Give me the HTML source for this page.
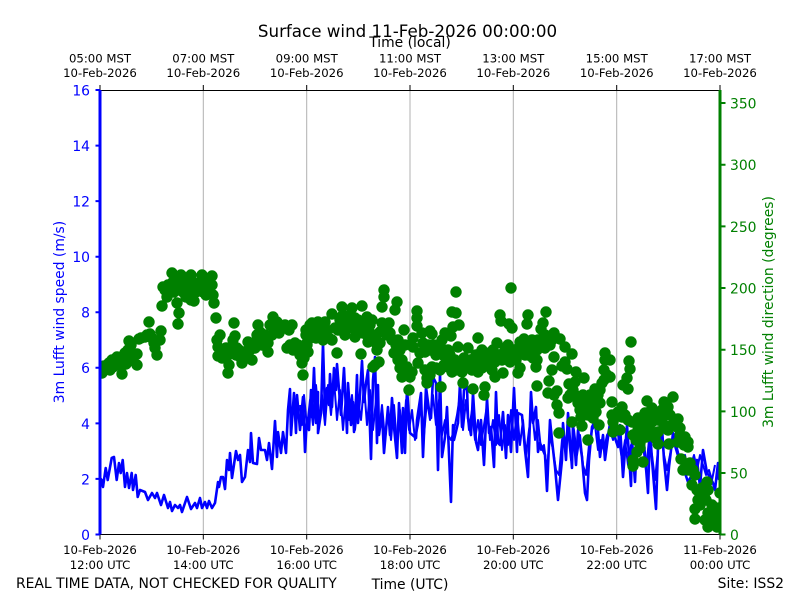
<!DOCTYPE html>
<html><head><meta charset="utf-8"><style>html,body{margin:0;padding:0;background:#fff}svg{display:block}text{font-family:"DejaVu Sans","Liberation Sans",sans-serif}</style></head><body>
<svg width="800" height="600" viewBox="0 0 800 600" xmlns="http://www.w3.org/2000/svg">
<defs><clipPath id="c"><rect x="100" y="90" width="620" height="444.5"/></clipPath></defs>
<path d="M203.3 90V534.5M306.7 90V534.5M410 90V534.5M513.3 90V534.5M616.7 90V534.5" stroke="#b0b0b0" stroke-width="1" fill="none"/>
<g clip-path="url(#c)">
<polyline fill="none" stroke="#0000ff" stroke-width="2.6" stroke-linejoin="round" points="100,478 101.7,480 103,487 105.7,468 107.7,480 111.7,458 114,457 116.7,480 119,463 120.7,473 122.7,460 125,487 127,473 129,488 131.7,473 133,490 135.7,475 137.7,497 140,490 145,492 148,500 152,493 155,498 157,493 161,505 164,495 168,508 170,502 172,511 175,505 178,508 180,505 182,512 187,497 191,509 195,503 197,508 200,498 202,508 205,502 207,508 209,501 212,508 215,503 218,482 219,487 221,477 223,477 225,489 227,460 229,470 230,453 232,478 236,451 238,460 240,455 242,482 245,477 248,450 250,462 251,433 253,463 257,464 259,438 261,450 265,450 267,460 269,443 272,469 275,421 277,457 278,432 281,453 283,432 286,453 288,410 290,389 291,435 294,393 296,433 297,395 300,430 303,397 305,452 307,418 309,430 311,390 312,417 314,368 316,423 318,392 318,433 321,413 323,343 325,413 327,388 329,405 330,374 332,407 334,368 336,390 337,364 341,415 344,368 347,433 348,383 351,425 353,402 354,432 356,400 357,375 358,423 360,395 362,361 364,402 366,383 368,370 371,459 373,380 375,357 377,443 378,385 379,435 382,413 384,453 388,407 390,435 392,398 394,427 397,458 399,403 402,453 403,408 405,453 407,388 410,433 416,438 417,420 421,393 423,457 426,387 429,410 431,418 433,377 436,383 438,470 440,373 442,457 445,437 447,407 451,502 453,425 454,440 458,423 460,383 462,427 464,390 467,387 468,418 471,435 473,393 476,442 478,450 481,420 484,465 487,398 489,433 491,427 494,467 496,392 498,443 500,445 503,412 506,458 508,415 511,452 514,388 517,452 518,413 522,415 525,450 528,477 531,392 533,423 536,407 538,452 540,443 545,455 547,491 550,420 552,440 555,467 558,500 562,460 563,423 566,460 568,413 572,468 573,423 576,465 578,430 582,457 585,493 587,500 589,460 592,427 597,417 600,457 603,435 605,460 608,437 610,423 618,447 620,425 623,477 627,425 631,486 632,440 635,482 638,415 640,440 644,443 648,493 650,430 652,460 656,509 658,447 662,427 664,460 667,490 669,467 673,433 678,453 685,473 688,482 693,473 697,460 700,487 703,450 707,473 710,477 713,483 715,490 718,463 719,480"/>
<polyline fill="none" stroke="#0000ff" stroke-width="2" stroke-linejoin="round" points="300,405 302,425 304,395 307,428 310,400 313,425 316,385 319,420 322,395 325,425 328,385 331,415 334,380 337,420 340,390 343,430 346,395 349,420 352,395 355,430 358,400 361,420 364,385 367,425 370,390 373,430 376,400 379,432 382,405 385,440 388,412 391,440 394,405 397,445 400,410 403,445 406,400 409,430 412,410 415,440 418,425 421,405 424,435 427,400 430,420 433,395 436,425 439,400 442,435 445,420 448,435 451,440 454,430 457,415 460,395 463,430 466,400 469,430 472,410 475,440 478,420 481,445 484,425 487,405 490,440 493,420 496,445 499,415 502,450 505,425 508,445 511,410 514,440 517,410 520,445 523,420 526,455 529,430 532,410 535,440 538,420 541,450 544,445 547,470 550,435 553,450 556,470 559,475 562,440 565,445 568,430 571,460 574,430 577,455 580,435 583,465 586,475 589,445 592,430 595,425 598,450 601,440 604,450 607,435 610,430 613,440 616,425 619,440 622,460 625,440 628,465 631,445 634,465 637,430 640,450 643,445 646,470 649,440 652,455 655,480 658,450 661,435 664,455 667,470 670,455 673,440 676,450 679,460 682,465 685,455 688,470 691,465 694,455 697,470 700,455 703,465 706,475 709,470 712,480 715,465"/>
<path fill="none" stroke="#008000" stroke-width="11.4" stroke-linecap="round" d="M101 372h.01M102 373h.01M102 367h.01M105 370h.01M109 363h.01M113 367h.01M117 357h.01M122 374h.01M123 360h.01M128 350h.01M129 341h.01M127 357h.01M133 360h.01M137 365h.01M137 354h.01M139 339h.01M145 337h.01M149 322h.01M150 334h.01M154 343h.01M157 355h.01M161 331h.01M160 340h.01M162 306h.01M163 287h.01M167 297h.01M172 273h.01M170 290h.01M175 283h.01M181 275h.01M177 303h.01M179 313h.01M178 324h.01M183 292h.01M187 280h.01M191 275h.01M194 301h.01M188 297h.01M195 283h.01M202 275h.01M203 292h.01M202 283h.01M212 276h.01M212 285h.01M213 295h.01M214 303h.01M207 288h.01M216 318h.01M234 323h.01M220 335h.01M217 340h.01M218 347h.01M218 356h.01M223 350h.01M228 355h.01M229 365h.01M228 373h.01M235 336h.01M237 348h.01M241 358h.01M242 363h.01M248 342h.01M252 360h.01M255 348h.01M258 325h.01M257 335h.01M268 352h.01M263 340h.01M273 317h.01M275 327h.01M282 328h.01M292 325h.01M287 348h.01M295 343h.01M302 363h.01M303 375h.01M307 345h.01M310 325h.01M305 345h.01M312 323h.01M318 322h.01M325 322h.01M312 333h.01M322 333h.01M332 340h.01M337 353h.01M332 314h.01M342 307h.01M340 320h.01M345 335h.01M352 308h.01M348 323h.01M355 337h.01M361 354h.01M362 306h.01M358 320h.01M367 317h.01M370 325h.01M370 333h.01M368 342h.01M377 350h.01M380 343h.01M380 332h.01M382 323h.01M389 323h.01M382 307h.01M384 297h.01M384 290h.01M397 302h.01M395 310h.01M404 330h.01M398 340h.01M394 353h.01M402 360h.01M379 362h.01M373 367h.01M375 365h.01M403 372h.01M402 377h.01M412 372h.01M410 377h.01M409 390h.01M417 311h.01M417 318h.01M417 326h.01M413 338h.01M413 347h.01M422 333h.01M423 343h.01M420 353h.01M418 363h.01M430 331h.01M432 334h.01M427 383h.01M427 378h.01M432 367h.01M430 350h.01M442 340h.01M438 350h.01M445 333h.01M448 350h.01M441 387h.01M440 370h.01M452 312h.01M456 313h.01M456 292h.01M453 327h.01M451 336h.01M459 325h.01M458 347h.01M455 360h.01M448 367h.01M468 348h.01M463 383h.01M462 372h.01M467 363h.01M473 389h.01M478 338h.01M482 350h.01M485 387h.01M484 395h.01M472 370h.01M482 368h.01M492 370h.01M497 343h.01M495 377h.01M488 357h.01M503 373h.01M500 315h.01M501 321h.01M509 324h.01M512 328h.01M508 345h.01M511 288h.01M512 357h.01M518 373h.01M520 342h.01M546 312h.01M528 315h.01M527 324h.01M543 323h.01M541 329h.01M524 339h.01M520 345h.01M532 340h.01M538 340h.01M548 336h.01M554 333h.01M560 339h.01M565 347h.01M545 348h.01M554 357h.01M572 354h.01M525 355h.01M537 360h.01M536 367h.01M565 362h.01M562 366h.01M567 369h.01M552 370h.01M520 368h.01M518 373h.01M576 372h.01M584 378h.01M549 381h.01M537 386h.01M569 384h.01M575 382h.01M573 390h.01M548 393h.01M557 391h.01M554 395h.01M568 398h.01M557 405h.01M559 413h.01M583 395h.01M578 403h.01M588 400h.01M595 389h.01M602 383h.01M605 353h.01M605 360h.01M610 360h.01M604 370h.01M610 377h.01M600 403h.01M593 408h.01M587 410h.01M581 417h.01M593 418h.01M572 422h.01M582 426h.01M559 433h.01M588 440h.01M599 425h.01M612 402h.01M622 407h.01M615 415h.01M613 422h.01M622 417h.01M613 432h.01M620 430h.01M631 342h.01M629 361h.01M630 369h.01M627 378h.01M623 385h.01M628 389h.01M647 401h.01M652 408h.01M645 413h.01M664 402h.01M673 397h.01M668 407h.01M662 410h.01M632 422h.01M652 422h.01M678 419h.01M642 425h.01M633 435h.01M643 432h.01M658 432h.01M668 430h.01M677 427h.01M680 435h.01M658 444h.01M669 444h.01M678 442h.01M688 442h.01M688 447h.01M640 443h.01M640 448h.01M637 452h.01M633 460h.01M633 466h.01M643 462h.01M681 459h.01M683 470h.01M690 463h.01M693 470h.01M692 485h.01M707 482h.01M702 488h.01M705 493h.01M698 500h.01M700 505h.01M695 509h.01M695 519h.01M712 505h.01M708 513h.01M715 517h.01M708 527h.01M717 527h.01M720 493h.01M719 508h.01M104 366h.01M107 368h.01M110 370h.01M112 360h.01M115 362h.01M119 365h.01M125 353h.01M126 364h.01M131 345h.01M134 355h.01M141 338h.01M147 335h.01M152 338h.01M155 348h.01M165 290h.01M168 285h.01M172 283h.01M174 292h.01M178 287h.01M180 280h.01M183 283h.01M186 290h.01M189 287h.01M192 282h.01M196 292h.01M199 286h.01M205 280h.01M206 295h.01M209 283h.01M210 292h.01M186 297h.01M191 300h.01M168 293h.01M222 358h.01M226 348h.01M231 347h.01M233 340h.01M236 355h.01M239 350h.01M244 352h.01M246 358h.01M250 350h.01M253 343h.01M257 345h.01M260 332h.01M262 345h.01M265 335h.01M268 343h.01M270 325h.01M272 335h.01M277 322h.01M279 333h.01M285 325h.01M289 330h.01M290 345h.01M293 350h.01M298 345h.01M300 355h.01M304 358h.01M306 335h.01M308 352h.01M306 330h.01M308 340h.01M310 333h.01M314 328h.01M316 338h.01M320 328h.01M323 340h.01M327 330h.01M329 338h.01M335 328h.01M338 330h.01M343 315h.01M346 325h.01M350 315h.01M353 328h.01M355 318h.01M358 330h.01M361 325h.01M363 333h.01M365 325h.01M367 335h.01M372 320h.01M374 335h.01M376 343h.01M385 328h.01M387 335h.01M390 333h.01M392 340h.01M396 345h.01M400 350h.01M405 345h.01M398 360h.01M407 367h.01M405 375h.01M400 368h.01M425 352h.01M428 345h.01M434 345h.01M436 355h.01M440 345h.01M443 355h.01M446 358h.01M450 355h.01M453 362h.01M456 370h.01M460 362h.01M464 358h.01M466 368h.01M470 360h.01M474 365h.01M476 355h.01M478 372h.01M480 360h.01M484 352h.01M486 365h.01M490 358h.01M493 350h.01M495 362h.01M499 355h.01M502 360h.01M505 350h.01M508 355h.01M510 362h.01M514 350h.01M516 360h.01M520 352h.01M425 370h.01M430 375h.01M436 368h.01M444 365h.01M452 372h.01M458 368h.01M522 345h.01M526 342h.01M530 348h.01M534 345h.01M537 350h.01M541 345h.01M546 342h.01M550 345h.01M528 355h.01M533 358h.01M530 350h.01M545 335h.01M552 340h.01M570 395h.01M575 395h.01M580 410h.01M584 405h.01M590 405h.01M585 400h.01M592 400h.01M596 405h.01M598 395h.01M600 390h.01M604 380h.01M607 375h.01M590 395h.01M588 415h.01M596 412h.01M612 415h.01M618 412h.01M625 415h.01M628 420h.01M638 418h.01M645 420h.01M650 415h.01M655 415h.01M658 420h.01M662 420h.01M665 415h.01M670 415h.01M675 420h.01M638 430h.01M646 437h.01M650 430h.01M655 438h.01M664 425h.01M672 425h.01M636 440h.01M680 428h.01M685 437h.01M684 445h.01M686 465h.01M688 470h.01M695 475h.01M697 490h.01M700 495h.01M703 498h.01M706 500h.01M708 490h.01M712 515h.01M714 522h.01M716 510h.01M718 520h.01M710 522h.01M705 520h.01"/>
</g>
<path d="M100 90.5H720M100 534.5H720" stroke="#000" stroke-width="1" fill="none"/>
<path d="M100 90V85M203.3 90V85M306.7 90V85M410 90V85M513.3 90V85M616.7 90V85M720 90V85M100 534.5V539.5M203.3 534.5V539.5M306.7 534.5V539.5M410 534.5V539.5M513.3 534.5V539.5M616.7 534.5V539.5M720 534.5V539.5" stroke="#000" stroke-width="1" fill="none"/>
<path d="M100 90V534.5" stroke="#0000ff" stroke-width="3" fill="none"/>
<path d="M720 90V534.5" stroke="#008000" stroke-width="3" fill="none"/>
<path d="M95.5 90H100M95.5 145.6H100M95.5 201.1H100M95.5 256.7H100M95.5 312.3H100M95.5 367.8H100M95.5 423.4H100M95.5 478.9H100M95.5 534.5H100" stroke="#0000ff" stroke-width="2" fill="none"/>
<path d="M720 103H725.5M720 164.7H725.5M720 226.4H725.5M720 288H725.5M720 349.7H725.5M720 411.4H725.5M720 473H725.5M720 534.5H725.5" stroke="#008000" stroke-width="2" fill="none"/>
<text x="407.5" y="37" font-size="16.7" fill="#000" text-anchor="middle">Surface wind 11-Feb-2026 00:00:00</text>
<text x="410" y="47" font-size="13.9" fill="#000" text-anchor="middle">Time (local)</text>
<g font-size="11.7" fill="#000" text-anchor="middle">
<text x="100" y="62.5">05:00 MST</text><text x="100" y="77">10-Feb-2026</text>
<text x="203.3" y="62.5">07:00 MST</text><text x="203.3" y="77">10-Feb-2026</text>
<text x="306.7" y="62.5">09:00 MST</text><text x="306.7" y="77">10-Feb-2026</text>
<text x="410" y="62.5">11:00 MST</text><text x="410" y="77">10-Feb-2026</text>
<text x="513.3" y="62.5">13:00 MST</text><text x="513.3" y="77">10-Feb-2026</text>
<text x="616.7" y="62.5">15:00 MST</text><text x="616.7" y="77">10-Feb-2026</text>
<text x="720" y="62.5">17:00 MST</text><text x="720" y="77">10-Feb-2026</text>
<text x="100" y="554">10-Feb-2026</text><text x="100" y="569">12:00 UTC</text>
<text x="203.3" y="554">10-Feb-2026</text><text x="203.3" y="569">14:00 UTC</text>
<text x="306.7" y="554">10-Feb-2026</text><text x="306.7" y="569">16:00 UTC</text>
<text x="410" y="554">10-Feb-2026</text><text x="410" y="569">18:00 UTC</text>
<text x="513.3" y="554">10-Feb-2026</text><text x="513.3" y="569">20:00 UTC</text>
<text x="616.7" y="554">10-Feb-2026</text><text x="616.7" y="569">22:00 UTC</text>
<text x="720" y="554">11-Feb-2026</text><text x="720" y="569">00:00 UTC</text>
</g>
<g font-size="13.9" fill="#0000ff" text-anchor="end">
<text x="90" y="95.5">16</text><text x="90" y="151">14</text><text x="90" y="206.5">12</text><text x="90" y="262">10</text><text x="90" y="317.5">8</text><text x="90" y="373">6</text><text x="90" y="429">4</text><text x="90" y="484.5">2</text><text x="90" y="540">0</text>
</g>
<g font-size="13.9" fill="#008000">
<text x="730" y="108.5">350</text><text x="730" y="170">300</text><text x="730" y="232">250</text><text x="730" y="293.5">200</text><text x="730" y="355">150</text><text x="730" y="417">100</text><text x="730" y="478.5">50</text><text x="730" y="540">0</text>
</g>
<text transform="translate(64,312) rotate(-90)" font-size="13.9" fill="#0000ff" text-anchor="middle">3m Lufft wind speed (m/s)</text>
<text transform="translate(773,312) rotate(-90)" font-size="13.9" fill="#008000" text-anchor="middle">3m Lufft wind direction (degrees)</text>
<g font-size="13.9" fill="#000">
<text x="16" y="588">REAL TIME DATA, NOT CHECKED FOR QUALITY</text>
<text x="410" y="589" text-anchor="middle">Time (UTC)</text>
<text x="784" y="588" text-anchor="end">Site: ISS2</text>
</g>
</svg>
</body></html>
